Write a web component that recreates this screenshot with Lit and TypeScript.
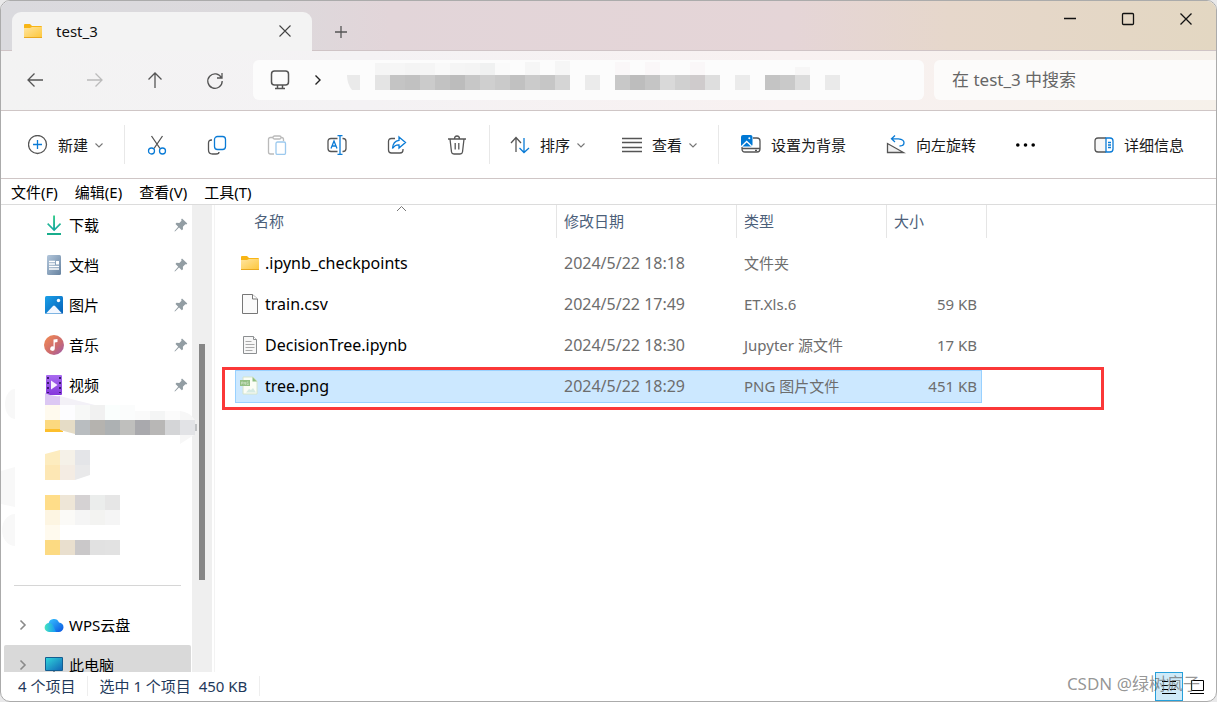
import { LitElement, html, css, svg } from 'lit';
import { customElement, state } from 'lit/decorators.js';

type Block = [number, number, number, number, string];

const folder = html`<svg width="20" height="20" viewBox="0 0 20 20" aria-hidden="true">
  <defs><linearGradient id="fg" x1="0" y1="0" x2="1" y2="1"><stop offset="0" stop-color="#ffe5a0"/><stop offset="1" stop-color="#fdc638"/></linearGradient></defs>
  <path d="M1 4q0-1 1-1h5l2 2h9q1 0 1 1v3H1z" fill="#f8b515"/>
  <path d="M1 7h6l2-1h10v10q0 1-1 1H2q-1 0-1-1z" fill="url(#fg)"/><path d="M1 16.500h18" stroke="#e9a820"/></svg>`;

const icons = {
  back: svg`<path d="M18 10H3M9.500 3.500 3 10l6.500 6.500"/>`,
  forward: svg`<path d="M2 10h15M10.500 3.500 17 10l-6.500 6.500"/>`,
  up: svg`<path d="M10 18V3M3.500 9.500 10 3l6.500 6.500"/>`,
  refresh: svg`<path d="M16.500 8A7.200 7.200 0 1 0 17.200 11M17 3v5h-5"/>`,
  monitor: svg`<rect x="1.500" y="1" width="17" height="14" rx="3"/><path d="M7.500 15v3M12.500 15v3M5 18.500h10"/>`,
  plus: svg`<path d="M10 4v12M4 10h12"/>`,
  close: svg`<path d="M4.500 4.500l11 11M15.500 4.500l-11 11"/>`,
  min: svg`<path d="M4 9.500h12"/>`,
  max: svg`<rect x="4.500" y="4.500" width="11" height="11" rx="1"/>`,
  create: svg`<circle cx="9.500" cy="9.500" r="9"/><path class="blue" d="M9.500 5v9M5 9.500h9"/>`,
  cut: svg`<path d="M4.500 1 13 13.500M15.500 1 7 13.500"/><circle class="blue" cx="4.500" cy="16" r="3"/><circle class="blue" cx="15.500" cy="16" r="3"/>`,
  copy: svg`<path d="M5 5H4.500Q1.500 5 1.500 8v7q0 4 4 4H9q3 0 3-2"/><rect class="blue" x="7.500" y="1.500" width="11" height="13" rx="3"/>`,
  paste: svg`<path d="M6 2.500H3.500q-2 0-2 2V17q0 2 2 2H7M14 2.500h.5q2 0 2 2V6"/><rect x="6" y="1" width="8" height="3" rx="1.500"/><rect class="blue" x="9" y="7" width="9.500" height="12.500" rx="1.500"/>`,
  rename: svg`<path d="M10.500 3.500H4q-3 0-3 3v7q0 3 3 3h6.500M15.500 3.500h.5q3 0 3 3v7q0 3-3 3h-.5"/><path class="blue" d="M10.500 .700h5M13 .700v18.600M10.500 19.300h5M4 13.500 7 6l3 7.500M5 11h4"/>`,
  share: svg`<path d="M8 3.500H4.500q-3 0-3 3V15q0 3 3 3H13q3 0 3-3v-1"/><path class="blue" d="M12 2l6.500 5.500L12 13v-3.200Q8 9.500 5.500 13.500 6 6 12 5.300z"/>`,
  trash: svg`<path d="M1 4h18M7.500 4q0-3 2.500-3t2.500 3M3 4l1.500 13q.300 2 2.500 2h6q2.200 0 2.500-2L17 4M8.200 8v6.500M11.800 8v6.500"/>`,
  sort: svg`<path d="M6 17V2.500M1 8l5-5.500L11 8"/><path class="blue" d="M14 3v14.500M9.500 13l4.500 4.500L19 13"/>`,
  lines: svg`<path d="M0 3.500h20M0 7.500h20M0 12.500h20M0 16.500h20"/>`,
  wallpaper: svg`<path d="M12 3h4q3 0 3 3v8q0 3-3 3H4q-3 0-3-3v-2M1 13.500h18"/><path d="M14 15.500h2"/><rect x="0" y="0" width="11.500" height="11.500" rx="2" fill="#0078d4" stroke="none"/><path d="M1 11l4.700-4.500L10.500 11" stroke="#fff"/><circle cx="8.300" cy="3.200" r="1" fill="#fff" stroke="none"/>`,
  rotate: svg`<path d="M1.500 8.500v9h16z" fill="#f1f1f1"/><path class="blue" d="M9 .500 5.500 3.800 9 7M6 3.800h6.500q5.500.500 5.500 4 0 3.200-4.500 3.200"/>`,
  details: svg`<path d="M12 3H4Q1 3 1 6v8q0 3 3 3h8" fill="#f7f7f7"/><path class="blue" d="M12 3h4q3 0 3 3v8q0 3-3 3h-4zM14 7.500h3M14 10h3M14 12.500h3"/>`,
};
const icon = (name: keyof typeof icons, size = 20) =>
  html`<svg class="line" width=${size} height=${size} viewBox="0 0 20 20" aria-hidden="true">${icons[name]}</svg>`;
const chevron = html`<svg class="chev" width="10" height="10" viewBox="0 0 10 10" aria-hidden="true"><path d="M1.500 3.500 5 7l3.500-3.500"/></svg>`;
const arrow = html`<svg class="arrow" width="10" height="12" viewBox="0 0 10 12" aria-hidden="true"><path d="M2.500 1.500 7 6l-4.500 4.500"/></svg>`;
const pin = html`<svg width="14" height="14" viewBox="0 0 14 14" aria-hidden="true"><path d="M8 .500 13.300 5.500 12.300 6.500 11.300 6.300 8.900 8.700 9 11.300 7.800 12.300 5 9.500 1.300 13.300.500 13.500.700 12.700 4.200 8.800 1.500 6 2.500 4.800 5.300 5 7.500 2.700 7.200 1.500z" fill="#929da3"/></svg>`;

const side = {
  download: svg`<defs><linearGradient id="dg" x1="0" y1="0" x2="0" y2="1"><stop stop-color="#35cb8b"/><stop offset="1" stop-color="#13a5a0"/></linearGradient></defs><path d="M9.100 0.500h1.900v12.500l5-5 1.100 1.200-7 7-7-7L4.200 8l4.900 5z" fill="url(#dg)"/><path d="M3 18h14v2H3z" fill="#18ad8c"/>`,
  document: svg`<defs><linearGradient id="og" x1="0" y1="0" x2="1" y2="1"><stop stop-color="#b3c7dc"/><stop offset="1" stop-color="#66829f"/></linearGradient></defs><rect x="3" y="0" width="14" height="20" rx="1.500" fill="url(#og)"/><path d="M5 6.500h6M5 9h6M5 11.500h10M5 14h10" stroke="#fff" stroke-width="1.300"/><path d="M12 6h3v3.500h-3z" fill="#fff"/>`,
  picture: svg`<defs><linearGradient id="pg" x1="0" y1="0" x2="1" y2="1"><stop stop-color="#1ba0e8"/><stop offset="1" stop-color="#0560b8"/></linearGradient></defs><rect x="1" y="1" width="18" height="18" rx="1.500" fill="url(#pg)"/><path d="M2 18.500 9 11q1-1 2 0l7 7.500z" fill="#f2f7ff"/><circle cx="14.500" cy="5.500" r="1.700" fill="#fff"/>`,
  music: svg`<defs><linearGradient id="mg" x1="0" y1="0" x2="1" y2="1"><stop stop-color="#f58c50"/><stop offset=".6" stop-color="#cb6a70"/><stop offset="1" stop-color="#9a5cb0"/></linearGradient></defs><circle cx="10" cy="10" r="10" fill="url(#mg)"/><path d="M9.500 4.500 13.500 4v3l-2.700.500v6a2.300 2.300 0 1 1-1.300-2z" fill="#fff"/>`,
  video: svg`<defs><linearGradient id="vg" x1="0" y1="0" x2="0" y2="1"><stop stop-color="#a96bf0"/><stop offset="1" stop-color="#8437dc"/></linearGradient></defs><rect x="2" y="0" width="16" height="20" rx="1" fill="url(#vg)"/><path d="M4 2v16M16 2v16" stroke="#3a1d70" stroke-width="2" stroke-dasharray="2 3"/><path d="M7 5.500 13.500 10 7 14.500z" fill="#f7efff"/>`,
  cloud: svg`<defs><linearGradient id="cg" x1="0" y1="0" x2="1" y2="1"><stop stop-color="#37c4ff"/><stop offset="1" stop-color="#0a53e0"/></linearGradient><linearGradient id="ch" x1="0" y1="0" x2="1" y2="0"><stop stop-color="#45e5c0"/><stop offset="1" stop-color="#1596f5"/></linearGradient></defs><path d="M4.500 8.500A5.500 5.500 0 0 1 15 7.500a4.700 4.700 0 0 1-.5 9.500H6z" fill="url(#cg)"/><path d="M5.200 8q3 0 4.300 3l2.500 6H5A4.500 4.500 0 0 1 5.200 8z" fill="url(#ch)"/>`,
  pc: svg`<defs><linearGradient id="sg" x1="0" y1="0" x2="1" y2="1"><stop stop-color="#2fd4da"/><stop offset="1" stop-color="#1268b8"/></linearGradient></defs><rect x="1" y="2" width="18" height="14" rx="1" fill="#135d91"/><rect x="2" y="3" width="16" height="12" fill="url(#sg)"/><path d="M9 16h2v2H9zM6 18h8v1H6z" fill="#7b8b96"/>`,
};
const sideIcon = (name: keyof typeof side) => html`<svg width="20" height="20" viewBox="0 0 20 20" aria-hidden="true">${side[name]}</svg>`;

const files = {
  folder,
  blank: html`<svg width="20" height="22" viewBox="0 0 20 22" aria-hidden="true"><path d="M2.500 1.500h10L17.500 6v14.500h-15z" fill="#fafafa" stroke="#777"/><path d="M12.500 1.500V6h5" fill="#fff" stroke="#777"/></svg>`,
  text: html`<svg width="20" height="22" viewBox="0 0 20 22" aria-hidden="true"><path d="M3.500 2.500h10l3 3v14h-13z" fill="#f7f7f7" stroke="#8c8f91"/><path d="M13.500 2.500v3h3" fill="#fff" stroke="#8c8f91"/><path d="M5.500 7.500h6M5.500 10.500h9M5.500 13.500h9M5.500 16.500h7" stroke="#aaa"/></svg>`,
  png: html`<svg width="20" height="22" viewBox="0 0 20 22" aria-hidden="true"><path d="M3 2h10l4 4v13H3z" fill="#fbfdf5" stroke="#d4e4cc"/><path d="M12.500 2v4.500H17z" fill="#8dbd80"/><path d="M0 5h10v6H0z" fill="#94c085"/><path d="M1.500 9.500V7h1.300v1.300H1.500M4 9.500V7l1.500 2.500V7M8.500 7H7v2.500h1.500V8.500" fill="none" stroke="#cfe3c6" stroke-width=".7"/><path d="M6 17.500 9 14l2 1 2-2 3 4.500z" fill="#d5eae2"/></svg>`,
};

const addressBlocks: Block[] = [
  [375, 75, 15, 15, '#e4e4e4'],
  ...['#c4c4c4', '#c1c1c1', '#cbcbcb', '#c2c2c2', '#bcbcbc', '#c7c7c7', '#cfcfcf', '#cacaca', '#c1c1c1', '#cbcbcb', '#c6c6c6', '#d5d5d5'].map((c, i): Block => [390 + i * 15, 75, 15, 15, c]),
  ...['#f5f5f5', '#f6f6f6', '#f4f4f4', '#f5f5f5', '#f9f9f9', '#f5f5f5', '#f4f4f4', '#f0f1f1', '#fafafa'].map((c, i): Block => [375 + i * 15, 63, 15, 12, c]),
  [525, 62, 15, 13, '#f6f6f6'], [555, 61, 15, 14, '#f6f6f6'], [585, 75, 15, 15, '#ebebeb'],
  ...['#c8c8c8', '#bdbdbd', '#c5c5c5', '#d9d9d9', '#d0d0d0', '#cfcbcc', '#dedede'].map((c, i): Block => [615 + i * 15, 75, 15, 15, c]),
  [615, 62, 15, 13, '#faf7f8'], [645, 62, 15, 13, '#faf7f8'], [690, 62, 15, 13, '#faf7f8'],
  [735, 75, 15, 15, '#ebebeb'], [765, 75, 15, 15, '#c4c4c4'], [780, 75, 15, 15, '#c9c9c9'], [795, 75, 15, 15, '#dcdcdc'],
  [795, 67, 15, 8, '#f7f6f6'], [825, 75, 15, 15, '#eaeaea'],
];
const strip = (x: number, y: number, colors: string[]): Block[] => colors.map((c, i): Block => [x + i * 15, y, 15, 15, c]);
const sideBlocks: Block[] = [
  ...strip(45, 405, ['#fffaee', '#fdfdff', '#f7f8f7', '#f1f1f1', '#fafefd', '#fbfcfc']),
  ...strip(135, 411, ['#fafafa', '#f4f5f5', '#fbfbfb']).map(([x, y, w, , c]): Block => [x, y, w, 9, c]),
  ...strip(75, 420, ['#b9bdc0', '#b5b3af', '#adb1b3', '#bfbfbd', '#a9a9ad', '#b8b7b6', '#d4d5d7', '#e2e3e6']),
  [195, 424, 2, 7, '#bfc1c3'],
  [75, 450, 15, 15, '#e4e5e8'],
  ...strip(45, 495, ['#ffdd89', '#eee6d7', '#d5d2d3', '#ebedec', '#e6e6e6']),
  ...strip(45, 510, ['#fdf5e2', '#fbfaf7', '#f5f5f5', '#f3f3f1', '#f5f5f5']),
  [45, 525, 15, 15, '#fffaee'],
  ...strip(45, 540, ['#fcda82', '#e9dfce', '#cac8c9', '#e1e1e1', '#e2e2e2']),
];
const rects = (blocks: Block[]) => blocks.map(([x, y, w, h, c]) => svg`<rect x=${x} y=${y} width=${w} height=${h} fill=${c}/>`);

const rows = [
  { icon: 'folder', name: '.ipynb_checkpoints', date: '2024/5/22 18:18', type: '文件夹', size: '' },
  { icon: 'blank', name: 'train.csv', date: '2024/5/22 17:49', type: 'ET.Xls.6', size: '59 KB' },
  { icon: 'text', name: 'DecisionTree.ipynb', date: '2024/5/22 18:30', type: 'Jupyter 源文件', size: '17 KB' },
  { icon: 'png', name: 'tree.png', date: '2024/5/22 18:29', type: 'PNG 图片文件', size: '451 KB' },
] as const;

@customElement('app-root')
export class AppRoot extends LitElement {
  @state() private selected = 3;

  static styles = css`
    :host { display: block; height: 100vh; background: #e9e9ea; font: 15px/20px "Noto Sans", "Noto Sans CJK SC", sans-serif; color: #1a1a1a; }
    * { box-sizing: border-box; }
    svg { display: block; flex: none; }
    button { font: inherit; color: inherit; background: none; border: 0; padding: 0; margin: 0; display: flex; align-items: center; white-space: nowrap; }
    .window { position: relative; height: 100%; border: 1px solid #ababab; border-radius: 10px; overflow: hidden; background: #fff; display: flex; flex-direction: column; }
    .line { fill: none; stroke: #555; stroke-width: 1.3; }
    .line .blue { stroke: #0a7bd6; }
    .chev, .arrow { fill: none; stroke: #777; stroke-width: 1.1; }
    .arrow { stroke-width: 1.6; stroke: #8a8a8a; }

    .title { flex: none; height: 50px; display: flex; background: linear-gradient(90deg, #dadade 0%, #dcd9dc 22%, #e2d5d9 32%, #e5d5d7 65%, #e6d7cb 78%, #e3d7c2 100%); box-shadow: inset 0 -1px #cfc4c6; }
    .tab { width: 300px; margin: 11px 0 0 11px; padding: 0 17px 2px 11px; background: #f3f3f3; border-radius: 9px 9px 0 0; display: flex; align-items: center; gap: 13px; color: #111; }
    .tab .close { margin-left: auto; }
    .tab .line { stroke: #444; stroke-width: 1.1; }
    .add { margin: 11px 0 0 19px; }
    .caption { margin-left: auto; display: flex; height: 36px; padding-right: 1px; }
    .caption button { width: 58px; justify-content: center; }
    .caption .line { stroke: #111; }

    .nav { flex: none; height: 60px; display: flex; align-items: center; padding: 0 0 2px 14px; gap: 20px; border-bottom: 1px solid #cfc6c6; background: linear-gradient(90deg, #f3f3f3 0%, #f4f2f4 30%, #f8f1f1 65%, #f6f1ea 100%); }
    .nav > button { width: 40px; height: 40px; justify-content: center; }
    .nav .off .line { stroke: #bbb; }
    .fields { flex: 1; display: flex; gap: 10px; margin-left: -2px; }
    .address { flex: 1; height: 40px; border-radius: 6px; background: #fcfcfc; display: flex; align-items: center; padding-left: 17px; overflow: hidden; }
    .address .line { stroke-width: 1.5; }
    .address .arrow { margin: 0 24px 0 23px; stroke: #222; stroke-width: 1.4; }
    .search { width: 282px; height: 40px; border: 0; outline: 0; border-radius: 6px 0 0 6px; background: #fcfbfa; padding: 0 18px; font: 17px/24px "Noto Sans", "Noto Sans CJK SC", sans-serif; color: #666; }
    .search::placeholder { color: #666; opacity: 1; }

    .tools { flex: none; height: 68px; display: flex; align-items: center; padding-left: 7px; border-bottom: 1px solid #cfc6c6; }
    .group { height: 39px; display: flex; align-items: center; padding: 0 20px; gap: 36px; border-right: 1px solid #e8e8e8; }
    .group.small { padding: 0 12px; gap: 20px; }
    .group.small button { width: 40px; height: 40px; justify-content: center; }
    .group.wide { padding-left: 22px; gap: 40px; border: 0; }
    .cmd { gap: 10px; }
    .cmd .chev { margin-left: -4px; }
    .small .off .line { opacity: .4; }
    .details { margin: 0 32px 0 auto; }

    .menu { flex: none; height: 26px; display: flex; align-items: center; padding: 0 10px; gap: 17px; border-bottom: 1px solid #dcdcdc; color: #000; }
    .body { flex: 1; min-height: 0; display: flex; overflow: hidden; }
    .side { position: relative; width: 191px; flex: none; }
    .item { height: 40px; width: 100%; padding: 0 4px 0 43px; display: flex; align-items: center; gap: 5px; color: #000; }
    .item .end { margin-left: auto; }
    .tree { padding-left: 17px; }
    .tree .arrow { margin-right: 11px; }
    .current { background: #d9d9d9; border-radius: 2px; width: 187px; margin-left: 3px; padding-left: 14px; }
    .hidden-items { height: 160px; }
    .mosaic { position: absolute; left: -1px; top: 180px; z-index: 1; pointer-events: none; }
    .rule { height: 40px; display: flex; align-items: center; padding: 0 11px 0 13px; }
    .rule hr { flex: 1; border: 0; border-top: 1px solid #d6d6d6; margin: 0; }
    .track { width: 20px; flex: none; background: #efefef; padding: 139px 7px 92px; }
    .thumb { height: 100%; background: #868686; }
    .content { position: relative; flex: 1; min-width: 0; margin-left: 2px; border-left: 1px solid #f3f3f3; padding-left: 20px; }
    .mark { position: absolute; left: 7px; top: 162px; width: 882px; height: 43px; border: 3px solid #fb3838; pointer-events: none; }

    table { table-layout: fixed; width: 752px; border-spacing: 0; color: #6d6d6d; }
    .c1 { width: 322px; } .c2 { width: 180px; } .c3 { width: 150px; } .c4 { width: 100px; }
    th { padding: 0 0 5px; font-weight: 400; text-align: left; color: #4c607a; }
    th div { position: relative; height: 33px; line-height: 32px; padding-left: 7px; border-right: 1px solid #e5e5e5; }
    th:first-child div { padding-left: 19px; }
    .asc { position: absolute; left: 161px; top: 0; fill: none; stroke: #777; }
    td { height: 41px; padding: 0 0 2px 7px; border: 4px solid transparent; border-width: 4px 0; background-clip: padding-box; white-space: nowrap; }
    td:first-child { padding-left: 5px; color: #000; }
    td:last-child { text-align: right; padding-right: 5px; border-right-width: 5px; }
    .name, .date { font-size: 16px; }
    .name { display: flex; align-items: center; gap: 5px; }
    .sel td { background-color: #cce8ff; box-shadow: inset 0 1px #99d1ff, inset 0 -1px #99d1ff; }
    .sel td:first-child { box-shadow: inset 0 1px #99d1ff, inset 0 -1px #99d1ff, inset 1px 0 #99d1ff; }
    .sel td:last-child { box-shadow: inset 0 1px #99d1ff, inset 0 -1px #99d1ff, inset -1px 0 #99d1ff; }

    .status { flex: none; height: 29px; display: flex; align-items: center; padding: 0 5px 0 17px; color: #1e395b; }
    .status span { padding-right: 12px; border-right: 1px solid #eee; margin: 0 11px 2px 0; white-space: pre; }
    .views { margin-left: auto; display: flex; height: 29px; }
    .views button { width: 28px; justify-content: center; }
    .views .on { background: #cfeaf8; border: 1px solid #26a0da; }
    .views svg { fill: none; stroke: #000; }
    .water { position: absolute; right: 16px; bottom: 6px; font-size: 17px; line-height: 22px; color: rgba(90, 90, 90, .65); white-space: nowrap; pointer-events: none; }
  `;

  private cmd(name: keyof typeof icons, label: string, menu = false) {
    return html`<button class="cmd">${icon(name)}${label}${menu ? chevron : ''}</button>`;
  }

  private place(name: keyof typeof side, label: string) {
    return html`<button class="item">${sideIcon(name)}<span>${label}</span><span class="end">${pin}</span></button>`;
  }

  render() {
    return html`<div class="window">
      <header class="title">
        <div class="tab">${folder}<span>test_3</span><button class="close" aria-label="关闭标签页">${icon('close')}</button></div>
        <button class="add" aria-label="新标签页">${icon('plus')}</button>
        <div class="caption">
          <button aria-label="最小化">${icon('min')}</button>
          <button aria-label="最大化">${icon('max')}</button>
          <button aria-label="关闭">${icon('close')}</button>
        </div>
      </header>
      <nav class="nav">
        <button aria-label="后退">${icon('back')}</button>
        <button class="off" aria-label="前进">${icon('forward')}</button>
        <button aria-label="向上">${icon('up')}</button>
        <button aria-label="刷新">${icon('refresh')}</button>
        <div class="fields">
          <div class="address">${icon('monitor')}${arrow}
            <svg width="500" height="40" viewBox="347 60 500 40" aria-hidden="true"><path d="M347 75h13v15h-8q-5-6-5-15z" fill="#eaeaea"/>${rects(addressBlocks)}</svg>
          </div>
          <input class="search" type="search" aria-label="搜索" placeholder="在 test_3 中搜索">
        </div>
      </nav>
      <div class="tools">
        <div class="group">${this.cmd('create', '新建', true)}</div>
        <div class="group small">
          <button aria-label="剪切">${icon('cut')}</button>
          <button aria-label="复制">${icon('copy')}</button>
          <button class="off" aria-label="粘贴">${icon('paste')}</button>
          <button aria-label="重命名">${icon('rename')}</button>
          <button aria-label="共享">${icon('share')}</button>
          <button aria-label="删除">${icon('trash')}</button>
        </div>
        <div class="group">${this.cmd('sort', '排序', true)}${this.cmd('lines', '查看', true)}</div>
        <div class="group wide">
          ${this.cmd('wallpaper', '设置为背景')}${this.cmd('rotate', '向左旋转')}
          <button aria-label="更多"><svg width="20" height="6" viewBox="0 0 20 6"><circle cx="1.800" cy="3" r="1.800"/><circle cx="9.500" cy="3" r="1.800"/><circle cx="17.200" cy="3" r="1.800"/></svg></button>
        </div>
        <div class="details">${this.cmd('details', '详细信息')}</div>
      </div>
      <div class="menu"><button>文件(F)</button><button>编辑(E)</button><button>查看(V)</button><button>工具(T)</button></div>
      <div class="body">
        <aside class="side">
          ${this.place('download', '下载')}${this.place('document', '文档')}${this.place('picture', '图片')}${this.place('music', '音乐')}${this.place('video', '视频')}
          <div class="hidden-items"></div>
          <svg class="mosaic" width="200" height="180" viewBox="0 385 200 180" aria-hidden="true">
            <path d="M15 389A10 15 0 0 0 15 419zM1 471l14-4v40l-14-3zM15 514a13 16 0 0 0 0 32z" fill="#f8f8f8"/>
            <path d="M45 393q8 4 15 3v9H45z" fill="#dcc8f3"/><path d="M60 396l15 4 20 5H60z" fill="#f3f1f7"/>
            ${rects(sideBlocks)}
            <path d="M180 411q10 1 15 9h-15zM180 435h14l-14 9z" fill="#f7f7f7"/>
            <path d="M45 420h15v12H45z" fill="#fcd97f"/><path d="M45 429h15l3 2v1H45z" fill="#fdbf2c"/><path d="M60 420h15v14l-15-4z" fill="#e5dcc6"/>
            <path d="M45 454l15-4v15H45z" fill="#fdecbf"/><path d="M60 450h15v15H60z" fill="#f5f1e8"/>
            <path d="M45 465h15v15H45z" fill="#fde7b4"/><path d="M60 465h15v15H60z" fill="#f4ece3"/><path d="M75 465h15v10l-15 5z" fill="#e9e9ea"/>
          </svg>
          <div class="rule"><hr></div>
          <button class="item tree">${arrow}${sideIcon('cloud')}<span>WPS云盘</span></button>
          <button class="item tree current">${arrow}${sideIcon('pc')}<span>此电脑</span></button>
        </aside>
        <div class="track"><div class="thumb"></div></div>
        <main class="content">
          <table>
            <colgroup><col class="c1"><col class="c2"><col class="c3"><col class="c4"></colgroup>
            <thead><tr>
              <th><div>名称<svg class="asc" width="11" height="8" viewBox="0 0 11 8"><path d="M1 6 5.500 1.500 10 6"/></svg></div></th>
              <th><div>修改日期</div></th><th><div>类型</div></th><th><div>大小</div></th>
            </tr></thead>
            <tbody>${rows.map((r, i) => html`<tr class=${i === this.selected ? 'sel' : ''} @click=${() => (this.selected = i)}>
              <td><div class="name">${files[r.icon]}<span>${r.name}</span></div></td><td class="date">${r.date}</td><td>${r.type}</td><td>${r.size}</td></tr>`)}</tbody>
          </table>
          <div class="mark"></div>
        </main>
      </div>
      <footer class="status">
        <span>4 个项目</span><span>选中 1 个项目  450 KB</span>
        <div class="views">
          <button class="on" aria-label="详细信息视图"><svg width="16" height="16" viewBox="0 0 16 16"><path d="M1 2.500h6M9 2.500h6M1 6.500h6M9 6.500h6M1 10.500h6M9 10.500h6M1 14.500h14"/></svg></button>
          <button aria-label="大图标视图"><svg width="16" height="16" viewBox="0 0 16 16"><path d="M2.500 1.500h12v10h-12zM1 14.500h14"/></svg></button>
        </div>
      </footer>
      <div class="water">CSDN @绿树疯子</div>
    </div>`;
  }
}
